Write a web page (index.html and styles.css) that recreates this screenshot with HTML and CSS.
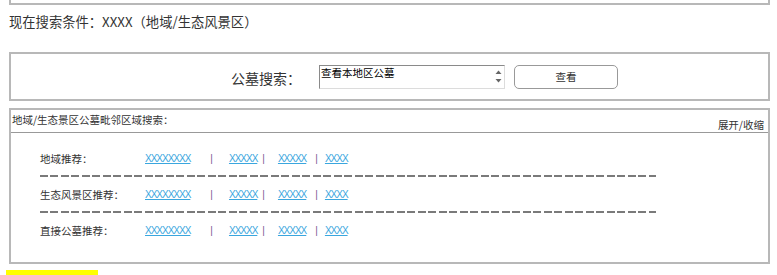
FILE: index.html
```html
<!DOCTYPE html>
<html lang="zh-CN">
<head>
<meta charset="utf-8">
<title>公墓搜索</title>
<link rel="stylesheet" href="styles.css">
</head>
<body>
<div class="page">
  <div class="stub"></div>
  <p class="cond">现在搜索条件：XXXX（地域/生态风景区）</p>

  <div class="search">
    <span class="search-label">公墓搜索：</span>
    <div class="listbox">
      <span class="opt">查看本地区公墓</span>
      <span class="spin">
        <svg width="7" height="16" viewBox="0 0 7 16"><path d="M0.5 5 L3.5 1.5 L6.5 5 Z" fill="#666"/><path d="M0.5 10 L3.5 13.5 L6.5 10 Z" fill="#666"/></svg>
      </span>
    </div>
    <button class="btn" type="button">查看</button>
  </div>

  <div class="nb">
    <div class="nb-head">
      <span class="nb-title">地域/生态景区公墓毗邻区域搜索：</span>
      <a class="toggle">展开/收缩</a>
    </div>
    <div class="nb-body">
      <div class="row">
        <span class="lbl">地域推荐：</span>
        <a class="lk">XXXXXXXX</a><span class="pipe p1">|</span><a class="lk l2">XXXXX</a><span class="pipe p2">|</span><a class="lk l3">XXXXX</a><span class="pipe p3">|</span><a class="lk l4">XXXX</a>
      </div>
      <div class="dash"></div>
      <div class="row">
        <span class="lbl">生态风景区推荐：</span>
        <a class="lk">XXXXXXXX</a><span class="pipe p1">|</span><a class="lk l2">XXXXX</a><span class="pipe p2">|</span><a class="lk l3">XXXXX</a><span class="pipe p3">|</span><a class="lk l4">XXXX</a>
      </div>
      <div class="dash"></div>
      <div class="row">
        <span class="lbl">直接公墓推荐：</span>
        <a class="lk">XXXXXXXX</a><span class="pipe p1">|</span><a class="lk l2">XXXXX</a><span class="pipe p2">|</span><a class="lk l3">XXXXX</a><span class="pipe p3">|</span><a class="lk l4">XXXX</a>
      </div>
    </div>
  </div>
  <div class="yellow"></div>
</div>
</body>
</html>
```

FILE: styles.css
```css
html, body {
  margin: 0;
  padding: 0;
  background: #fff;
}
body {
  font-family: "Noto Sans CJK SC", "Noto Sans", "Liberation Sans", sans-serif;
  color: #333;
  overflow: hidden;
}
.page {
  padding-left: 9px;
  width: 761px;
}
.stub {
  height: 3px;
  border: 2px solid #b8b8b8;
  border-top: none;
}
.cond {
  margin: 8px 0 0 0;
  font-size: 13.3px;
  line-height: 18px;
  color: #333;
}
.search {
  margin-top: 21px;
  height: 45px;
  border: 2px solid #b8b8b8;
  display: flex;
  align-items: center;
  padding-left: 220px;
}
.search-label {
  font-size: 14px;
  line-height: 20px;
  width: 88px;
  color: #333;
  margin-top: 2px;
}
.listbox {
  width: 184px;
  height: 22px;
  border: 1px solid;
  border-color: #8a8a8a #dcdcdc #dcdcdc #8a8a8a;
  display: flex;
  justify-content: space-between;
  align-items: flex-start;
  background: #fff;
}
.opt {
  font-size: 10.5px;
  line-height: 13px;
  color: #000;
  padding-left: 1px;
}
.spin {
  width: 12px;
  display: flex;
  justify-content: center;
  padding-top: 3px;
}
.btn {
  margin-left: 9px;
  width: 104px;
  height: 24px;
  border: 1px solid #999;
  border-radius: 5px;
  background: #fff;
  font-family: inherit;
  font-size: 10.5px;
  color: #333;
  padding: 0;
}
.nb {
  margin-top: 7px;
  border: 2px solid #b8b8b8;
}
.nb-head {
  height: 22px;
  border-bottom: 1px solid #999;
  display: flex;
  justify-content: space-between;
  align-items: flex-end;
}
.nb-title {
  font-size: 10.5px;
  line-height: 14px;
  padding-left: 1px;
  margin-bottom: 5px;
}
.toggle {
  font-size: 10.5px;
  line-height: 14px;
  margin-right: 4px;
  margin-bottom: 0;
  color: #333;
}
.nb-body {
  padding: 16px 0 23px 0;
}
.row {
  height: 18px;
  display: flex;
  align-items: center;
  padding-left: 29px;
}
.lbl {
  width: 105px;
  font-size: 10.5px;
  color: #333;
}
.lk {
  font-family: "Liberation Sans", sans-serif;
  font-size: 10px;
  letter-spacing: -1px;
  color: #3aa6de;
  text-decoration: underline;
}
.pipe {
  font-family: "Liberation Sans", sans-serif;
  font-size: 10px;
  color: #7d5a93;
}
.p1 { margin-left: 20px; }
.l2 { margin-left: 16px; }
.p2 { margin-left: 5px; }
.l3 { margin-left: 13px; }
.p3 { margin-left: 9px; }
.l4 { margin-left: 7px; }
.dash {
  margin: 8px 0 8px 29px;
  width: 616px;
  height: 2px;
  background: repeating-linear-gradient(to right, #7a7a7a 0 8px, transparent 8px 10.5px);
}
.yellow {
  margin: 6px 0 0 -3px;
  width: 92px;
  height: 6px;
  background: #ffff00;
}
```
